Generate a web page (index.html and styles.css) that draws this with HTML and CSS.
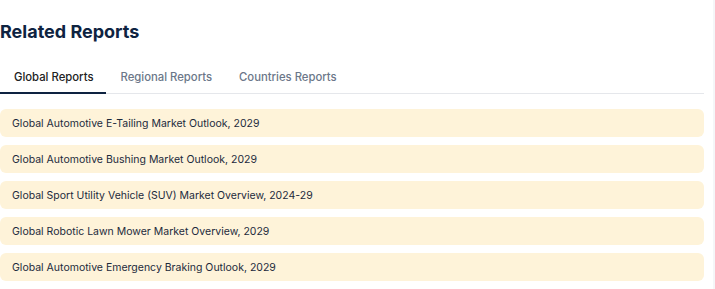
FILE: index.html
```html
<!DOCTYPE html>
<html lang="en">
<head>
<meta charset="utf-8">
<title>Related Reports</title>
<link rel="stylesheet" href="styles.css">
</head>
<body>
    <div class="related">
        <h2 class="title">Related Reports</h2>
        <ul class="tabs">
            <li class="on">Global Reports</li>
            <li>Regional Reports</li>
            <li>Countries Reports</li>
        </ul>
        <ul class="list">
            <li>Global Automotive E-Tailing Market Outlook, 2029</li>
            <li>Global Automotive Bushing Market Outlook, 2029</li>
            <li>Global Sport Utility Vehicle (SUV) Market Overview, 2024-29</li>
            <li>Global Robotic Lawn Mower Market Overview, 2029</li>
            <li>Global Automotive Emergency Braking Outlook, 2029</li>
        </ul>
    </div>
</body>
</html>
```

FILE: styles.css
```css
*{margin:0;padding:0}
html,body{height:100%}
body{font-family:Inter,"Liberation Sans",sans-serif;background:#fff;border-right:2px solid #f5f6f8;box-sizing:border-box}
.related{width:704px;padding-top:20px}
.related .title{font-size:18px;font-weight:700;color:#0e2341;line-height:24px;height:24px}
.related .tabs{display:flex;list-style:none;margin-top:20px;border-bottom:1px solid #e5e7eb;height:29px}
.related .tabs li{padding:0 13px 0 14px;font-size:11.3px;font-weight:500;color:#6b7789;line-height:26px}
.related .tabs li.on{color:#222;border-bottom:2px solid #0e2341;height:28px}
.related .list{list-style:none;margin-top:15px;display:flex;flex-direction:column;gap:8px}
.related .list li{background:#fef3d9;border-radius:6px;height:27px;padding-top:1px;line-height:28px;padding-left:12px;font-size:10.5px;color:#1c2a3c}
```
